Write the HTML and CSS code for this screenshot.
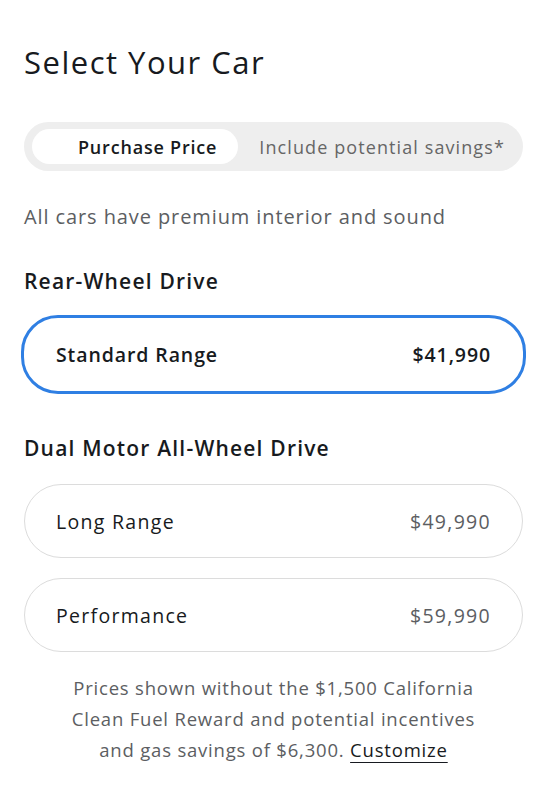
FILE: index.html
```html
<!DOCTYPE html>
<html lang="en">
<head>
  <meta charset="UTF-8" />
  <title>Select Your Car</title>
  <meta name="viewport" content="width=device-width, initial-scale=1.0" />
  <link rel="stylesheet" href="styles.css">
</head>
<body>
  <div class="page">
    <h1>Select Your Car</h1>

    <div class="toggle">
      <button class="toggle-option active">Purchase Price</button>
      <button class="toggle-option">Include potential savings*</button>
    </div>

    <p class="note">All cars have premium interior and sound</p>

    <h2>Rear-Wheel Drive</h2>
    <div class="option selected">
      <span class="name">Standard Range</span>
      <span class="price">$41,990</span>
    </div>

    <h2>Dual Motor All-Wheel Drive</h2>
    <div class="option">
      <span class="name">Long Range</span>
      <span class="price">$49,990</span>
    </div>
    <div class="option">
      <span class="name">Performance</span>
      <span class="price">$59,990</span>
    </div>

    <p class="disclaimer">Prices shown without the $1,500 California<br>Clean Fuel Reward and potential incentives<br>and gas savings of $6,300. <a href="#">Customize</a></p>
  </div>
</body>
</html>
```

FILE: styles.css
```css
body {
  margin: 0;
  background: #fff;
  font-family: 'Open Sans', 'Liberation Sans', sans-serif;
  color: #171a20;
}

.page {
  padding: 40px 17px 0 24px;
}

h1 {
  margin: 0 0 38px;
  font-size: 31px;
  font-weight: 400;
  letter-spacing: 1.5px;
  line-height: 44px;
}

.toggle {
  display: flex;
  align-items: center;
  height: 49px;
  padding: 0 8px;
  border-radius: 25px;
  background: #eeeeee;
}

.toggle-option {
  border: none;
  background: none;
  height: 35px;
  font-family: inherit;
  font-size: 18px;
  color: #666;
  padding: 0 21px;
  border-radius: 18px;
  letter-spacing: 1.1px;
  white-space: nowrap;
}

.toggle-option.active {
  width: 208px;
  background: #fff;
  color: #171a20;
  font-weight: 600;
  padding-left: 46px;
  text-align: left;
  letter-spacing: 0.8px;
}

.note {
  margin: 32px 0 0;
  font-size: 20px;
  color: #5c5e62;
  line-height: 28px;
  letter-spacing: 0.9px;
}

h2 {
  margin: 36px 0 22px;
  font-size: 21px;
  font-weight: 600;
  line-height: 28px;
  letter-spacing: 1.2px;
}

.option {
  display: flex;
  justify-content: space-between;
  align-items: center;
  height: 72px;
  padding: 0 31px;
  margin-bottom: 20px;
  border: 1px solid #dcdcdc;
  border-radius: 37px;
  font-size: 19.5px;
  letter-spacing: 1.3px;
}

.option .price {
  color: #5c5e62;
}

.option.selected {
  height: 73px;
  margin: -2px -3px 40px;
  padding: 0 32px;
  border: 3px solid #2f7fe3;
  font-weight: 600;
  letter-spacing: 0.9px;
}

.option.selected .price {
  color: #171a20;
}

.disclaimer {
  margin: 20px 0 0;
  text-align: center;
  font-size: 18.5px;
  line-height: 31px;
  color: #5c5e62;
  letter-spacing: 0.8px;
}

.disclaimer a {
  color: #171a20;
  text-decoration: underline;
  text-underline-offset: 5px;
}
```
